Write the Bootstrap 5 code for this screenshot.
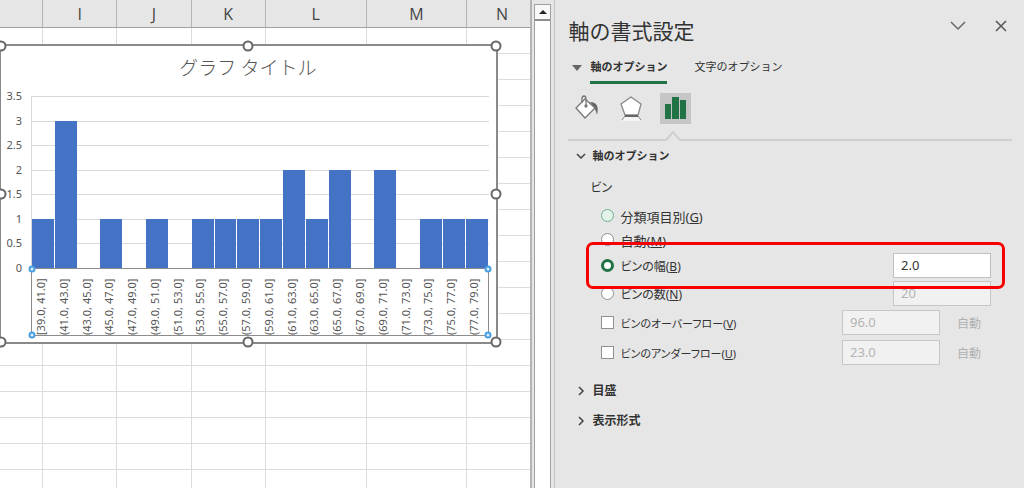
<!DOCTYPE html>
<html lang="ja">
<head>
<meta charset="utf-8">
<meta name="viewport" content="width=device-width, initial-scale=1">
<title>軸の書式設定</title>
<link rel="stylesheet" href="https://cdn.jsdelivr.net/npm/bootstrap@5.3.0/dist/css/bootstrap.min.css">
<style>
  body { background: #e6e6e6; color: #333; font: 12px/16px "Noto Sans", "Noto Sans CJK JP", sans-serif; }
  .sheet { flex: 0 0 52%; background: #fff; border-right: 2px solid #b4b4b4; }
  .cells { table-layout: fixed; border-collapse: separate; border-spacing: 0; }
  .cells th { height: 28px; padding: 0; background: #e6e6e6; border-right: 1px solid #b4b4b4; border-bottom: 1px solid #a0a0a0; font: 16px/26px "Open Sans", sans-serif; color: #444; text-align: center; }
  .cells td { height: 26px; padding: 0; border-right: 1px solid #dcdcdc; border-bottom: 1px solid #dcdcdc; }
  .cells th:last-child, .cells td:last-child { border-right: 0; }
  .cells th:last-child { padding-left: 6px; }
  .c-edge { width: 43px; } .c-std { width: 14%; } .c-wide { width: 19%; }

  .chart { left: -1px; top: 44px; width: 94%; background: #fff; border: 2px solid #8a8a8a; padding: 0 7px 6px 0; color: #555; font-size: 11px; line-height: 12px; }
  .chart-title { height: 40px; margin-bottom: 10px; font: 300 19px/42px "Noto Sans CJK JP", sans-serif; color: #555; padding-left: 6px; }
  .chart-grid { display: grid; grid-template-columns: 30px 1fr; }
  .y-axis { margin: -6px 0; padding-right: 9px; }
  .plot { display: grid; height: 172px; border-left: 1px solid #d9d9d9; }
  .plot > div { grid-area: 1 / 1; }
  .rules div { border-top: 1px solid #d9d9d9; }
  .bars > div { background: #4472c4; margin-right: 1px; }
  .x-axis { grid-column: 2; height: 68px; border: 1px solid #8c8c8c; }
  .x-axis > div { writing-mode: vertical-rl; transform: rotate(180deg); white-space: nowrap; display: flex; align-items: center; justify-content: flex-start; padding-left: 4px; }
  .grip { position: absolute; width: 11px; height: 11px; border: 2px solid #666; border-radius: 50%; background: #fff; transform: translate(-50%, -50%); }
  .grip-sm { width: 7px; height: 7px; border-color: #4a9fe0; background: #d8ecfb; }
  .g-l { left: 0; } .g-c { left: 50%; } .g-r { left: 100%; }
  .g-t { top: 0; } .g-m { top: 50%; } .g-b { top: 100%; }

  .scroller { width: 17px; margin: 4px 3px 0 2px; background: #fff; border: 1px solid #a0a0a0; border-bottom: 0; }
  .scroller button { height: 16px; background: #f8f8f8; border: 0; border-bottom: 2px solid #8c8c8c; }

  .pane { border-left: 1px solid #c4c4c4; padding: 12px 12px 0 13px; font-feature-settings: "palt"; min-width: 0; }
  .pane button { border: 0; background: none; padding: 0; color: inherit; }
  .pane-title { font: 21px/36px "Noto Sans CJK JP", sans-serif; font-feature-settings: normal; }
  .tabs { margin-top: 4px; gap: 27px; }
  .tabs button { height: 32px; border-bottom: 3px solid transparent; }
  .tabs .active { border-bottom-color: #217346; font-weight: 700; }
  .pane .dense { font-size: 11px; }
  .pane .roomy { font-size: 13px; }
  .kinds { margin-top: 9px; gap: 13px; }
  .kinds button { width: 31px; height: 31px; }
  .kinds .active { background: #c6c6c6; }
  .section-btn { height: 30px; font-weight: 700; gap: 6px; }
  .group-name { height: 32px; padding-left: 22px; line-height: 34px; }
  .opts { padding: 0 21px 0 33px; }
  .opt { height: 28px; gap: 6px; }
  .opt-low { height: 24px; }
  .opt-high { height: 30px; }
  .opt label, .auto { padding-top: 3px; }
  .opt .form-check-input { width: 13px; height: 13px; margin: 0; border: 1px solid #909090; border-radius: 0; background: #fff; box-shadow: none; flex: none; }
  .opt .form-check-input[type=radio] { border-radius: 50%; }
  .opt .form-check-input.hot { border-color: #6fb08c; background: #e3f3ea; }
  .opt .form-check-input:checked { border: 3px solid #217346; background: #fff; }
  .opt .form-control { width: 98px; height: 25px; padding: 0 7px; border: 1px solid #c0c0c0; border-radius: 0; background: #fff; font-size: 13px; color: #333; }
  .opt .form-control:disabled { background: #f1f1f1; color: #b4b4b4; border-color: #c6c6c6; }
  .auto { width: 51px; padding-left: 11px; color: #b0b0b0; margin-right: -6px; }
  .callout { inset: -9px -14px -10px -15px; border: 3px solid #f80000; border-radius: 7px; pointer-events: none; z-index: 2; }
  .more { margin-top: 9px; }
</style>
</head>
<body class="vh-100 overflow-hidden d-flex">

<main class="sheet position-relative overflow-hidden">
  <table class="cells w-100">
    <colgroup><col class="c-edge"><col class="c-std"><col class="c-std"><col class="c-std"><col class="c-wide"><col class="c-wide"><col></colgroup>
    <thead><tr><th></th><th>I</th><th>J</th><th>K</th><th>L</th><th>M</th><th>N</th></tr></thead>
    <tbody id="rows"></tbody>
  </table>

  <section class="chart position-absolute">
    <div class="chart-title text-center">グラフ タイトル</div>
    <div class="chart-grid">
      <div class="y-axis d-flex flex-column justify-content-between text-end">
        <div>3.5</div><div>3</div><div>2.5</div><div>2</div><div>1.5</div><div>1</div><div>0.5</div><div>0</div>
      </div>
      <div class="plot">
        <div class="rules d-flex flex-column">
          <div class="flex-fill"></div><div class="flex-fill"></div><div class="flex-fill"></div><div class="flex-fill"></div><div class="flex-fill"></div><div class="flex-fill"></div><div class="flex-fill"></div>
        </div>
        <div class="bars d-flex align-items-end" id="bars"></div>
      </div>
      <div class="x-axis d-flex position-relative" id="ticks">
        <span class="grip grip-sm g-l g-t"></span><span class="grip grip-sm g-r g-t"></span>
        <span class="grip grip-sm g-l g-b"></span><span class="grip grip-sm g-r g-b"></span>
      </div>
    </div>
    <span class="grip g-l g-t"></span><span class="grip g-c g-t"></span><span class="grip g-r g-t"></span>
    <span class="grip g-l g-m"></span><span class="grip g-r g-m"></span>
    <span class="grip g-l g-b"></span><span class="grip g-c g-b"></span><span class="grip g-r g-b"></span>
  </section>
</main>

<div class="scroller d-flex flex-column flex-shrink-0">
  <button type="button" class="p-0 d-flex align-items-center justify-content-center" aria-label="上へスクロール">
    <svg width="8" height="4" viewBox="0 0 8 4"><path d="M0 4 4 0l4 4z" fill="#222"/></svg>
  </button>
</div>

<aside class="pane flex-fill">
  <header class="d-flex align-items-center">
    <h1 class="pane-title m-0 flex-fill">軸の書式設定</h1>
    <button type="button" class="d-flex me-4" aria-label="オプション"><svg width="16" height="18" viewBox="0 0 16 18" fill="none" stroke="#666" stroke-width="1.5"><path d="m1 1 7 7 7-7"/></svg></button>
    <button type="button" class="d-flex mx-1" aria-label="閉じる"><svg width="14" height="20" viewBox="0 0 14 20" fill="none" stroke="#555" stroke-width="1.5"><path d="m2 1 10 10M12 1 2 11"/></svg></button>
  </header>

  <nav class="tabs d-flex">
    <div class="d-flex align-items-center ps-1">
      <svg class="me-2" width="10" height="6" viewBox="0 0 10 6"><path d="M0 0h10L5 6z" fill="#666"/></svg>
      <button type="button" class="active dense">軸のオプション</button>
    </div>
    <button type="button" class="dense">文字のオプション</button>
  </nav>

  <div class="kinds d-flex ps-1">
    <button type="button" aria-label="塗りつぶしと線"><svg width="31" height="31" viewBox="0 0 31 31" fill="none" stroke="#777" stroke-width="1.3"><path d="M18 9c7 0 9 5 7 13-1-5-3-8-7-13z" fill="#666" stroke="none"/><path d="m13 6 10 9-10 10-9-10z" fill="#fff"/><path d="M10 10V6c0-4 4-4 4 0v7"/><circle cx="14" cy="13" r="1" fill="#666"/></svg></button>
    <button type="button" aria-label="効果"><svg width="31" height="31" viewBox="0 0 31 31"><path d="M9 23h13l3 5H6z" fill="#f4f4f4"/><path d="m15 4 10 7-3 11H9L5 11z" fill="#fff" stroke="#888" stroke-width="1.3"/><path d="M9 23h13" stroke="#666" stroke-width="2"/><path d="m9 23-3 4m16-4 3 4" stroke="#888"/></svg></button>
    <button type="button" class="active" aria-label="軸のオプション"><svg width="31" height="31" viewBox="0 0 31 31" fill="#217346"><path d="M5 11h6v15H5zM12 4h7v22h-7zM20 7h6v19h-6z"/></svg></button>
  </div>
  <svg class="d-block w-100" height="17" fill="none" stroke="#cfcfcf" stroke-width="2"><path d="M0 16h98l7-8 7 8h2000"/></svg>

  <button type="button" class="section-btn dense d-flex align-items-center ps-2"><svg width="10" height="6" viewBox="0 0 10 6" fill="none" stroke="#444" stroke-width="1.5"><path d="m1 1 4 4 4-4"/></svg>軸のオプション</button>
  <div class="group-name">ビン</div>

  <form class="opts">
    <div class="opt opt-low d-flex align-items-center"><input class="form-check-input hot" type="radio" name="bin" id="bg"><label class="roomy" for="bg">分類項目別(<u>G</u>)</label></div>
    <div class="opt opt-low d-flex align-items-center"><input class="form-check-input" type="radio" name="bin" id="bm"><label class="roomy" for="bm">自動(<u>M</u>)</label></div>
    <div class="opt d-flex align-items-center position-relative"><input class="form-check-input" type="radio" name="bin" id="bb" checked><label for="bb">ビンの幅(<u>B</u>)</label><input class="form-control ms-auto" type="text" value="2.0" aria-label="ビンの幅"><span class="callout position-absolute"></span></div>
    <div class="opt d-flex align-items-center"><input class="form-check-input" type="radio" name="bin" id="bn"><label for="bn">ビンの数(<u>N</u>)</label><input class="form-control ms-auto" type="text" value="20" aria-label="ビンの数" disabled></div>
    <div class="opt opt-high d-flex align-items-center"><input class="form-check-input" type="checkbox" id="bv"><label class="dense" for="bv">ビンのオーバーフロー(<u>V</u>)</label><input class="form-control ms-auto" type="text" value="96.0" aria-label="ビンのオーバーフロー" disabled><span class="auto">自動</span></div>
    <div class="opt opt-high d-flex align-items-center"><input class="form-check-input" type="checkbox" id="bu"><label class="dense" for="bu">ビンのアンダーフロー(<u>U</u>)</label><input class="form-control ms-auto" type="text" value="23.0" aria-label="ビンのアンダーフロー" disabled><span class="auto">自動</span></div>
  </form>

  <div class="more">
    <button type="button" class="section-btn d-flex align-items-center ps-2"><svg width="10" height="10" viewBox="0 0 10 10" fill="none" stroke="#444" stroke-width="1.5"><path d="m3 1 4 4-4 4"/></svg>目盛</button>
    <button type="button" class="section-btn d-flex align-items-center ps-2"><svg width="10" height="10" viewBox="0 0 10 10" fill="none" stroke="#444" stroke-width="1.5"><path d="m3 1 4 4-4 4"/></svg>表示形式</button>
  </div>
</aside>

<script src="https://cdn.jsdelivr.net/npm/bootstrap@5.3.0/dist/js/bootstrap.bundle.min.js"></script>
<script>
  document.getElementById('rows').innerHTML = ('<tr>' + '<td></td>'.repeat(7) + '</tr>').repeat(18);
  // Histogram: one count per bin, bins are 2.0 wide starting at 39.0
  const counts = [1,3,0,1,0,1,0,1,1,1,1,2,1,2,0,2,0,1,1,1];
  const bars = document.getElementById('bars'), ticks = document.getElementById('ticks');
  counts.forEach((n, i) => {
    const from = 39 + i * 2;
    bars.insertAdjacentHTML('beforeend', `<div style="flex:1 1 0;height:${n / 3.5 * 100}%"></div>`);
    ticks.insertAdjacentHTML('beforeend', `<div style="flex:1 1 0">${i ? '(' : '['}${from}.0, ${from + 2}.0]</div>`);
  });
</script>
</body>
</html>
